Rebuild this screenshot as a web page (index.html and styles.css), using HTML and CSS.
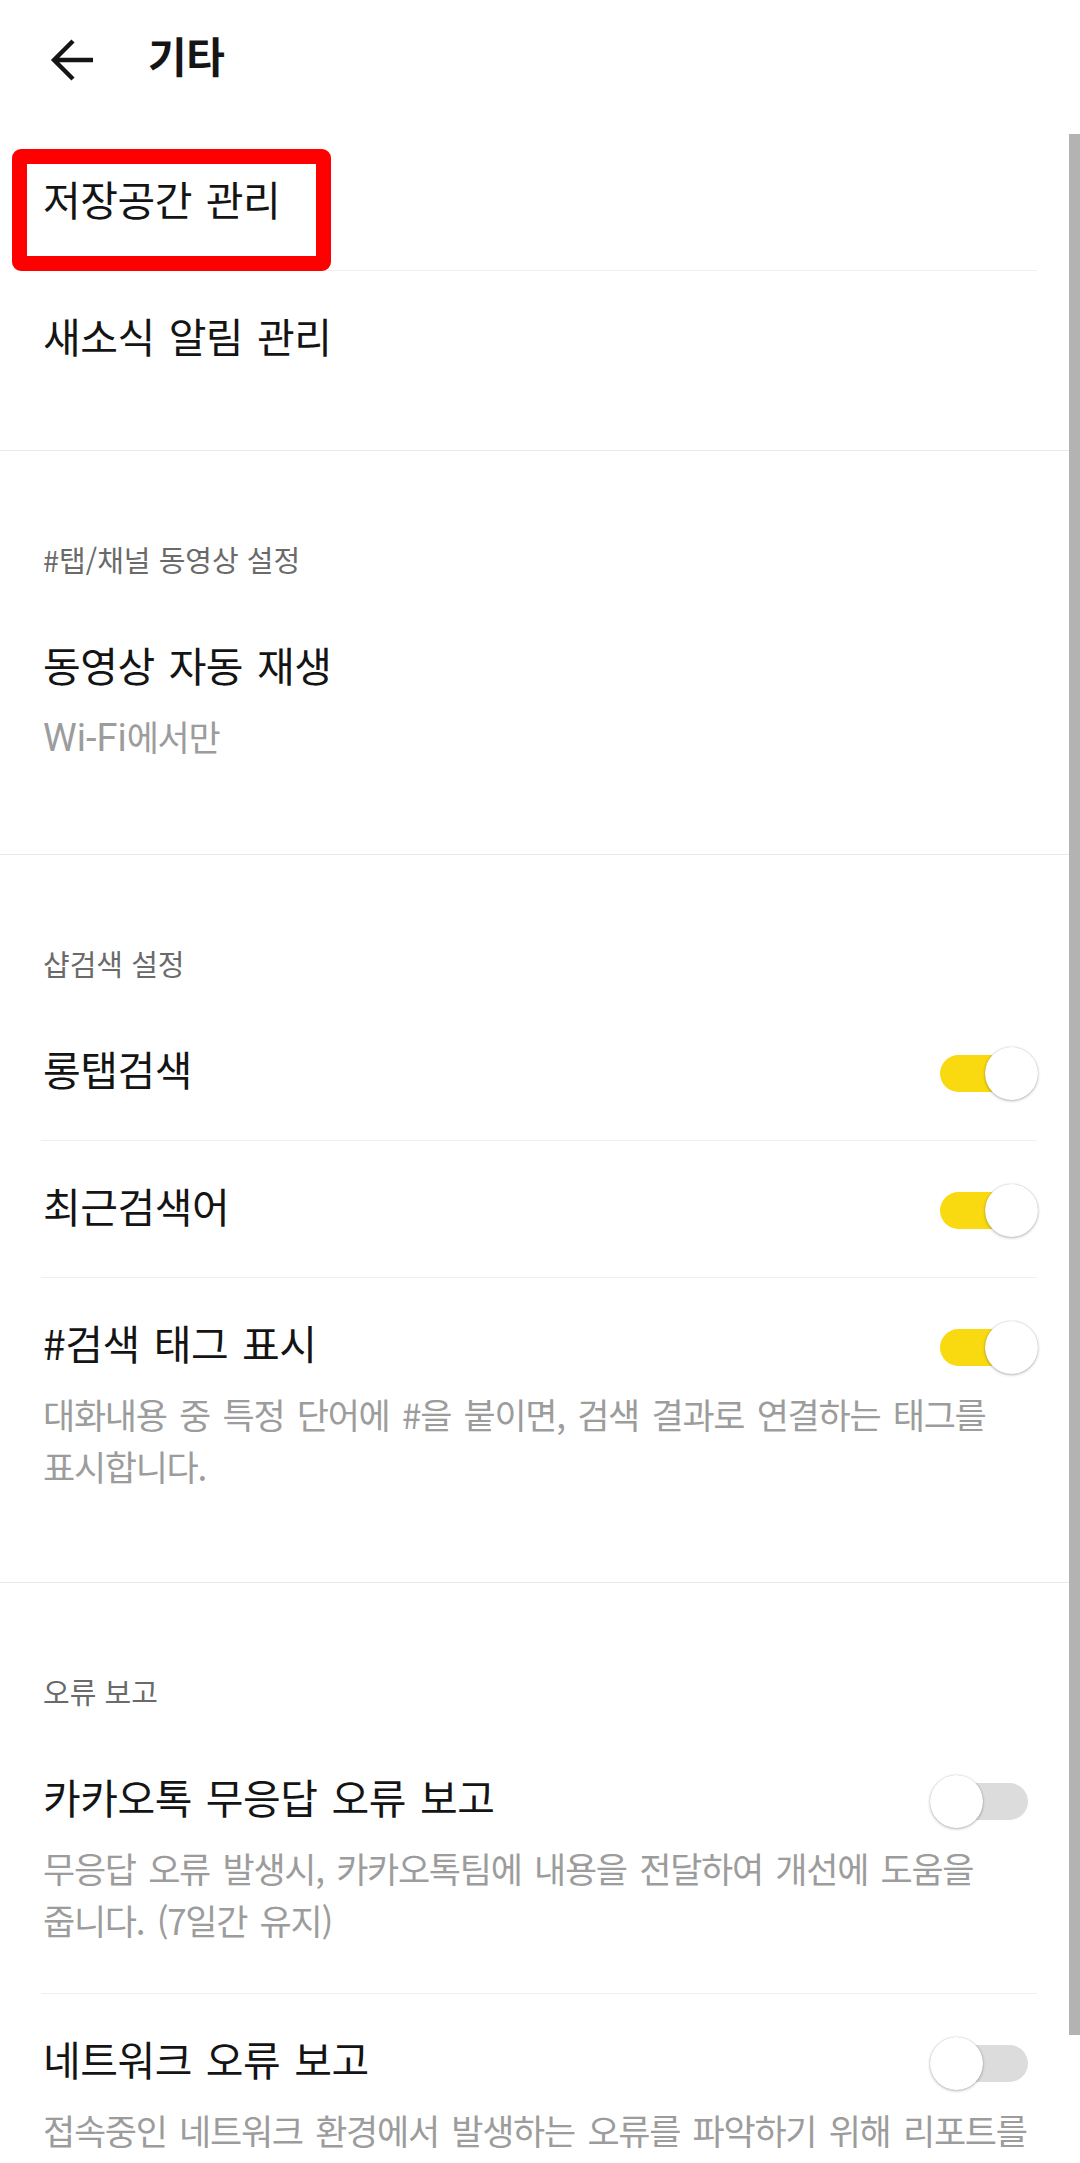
FILE: index.html
```html
<!DOCTYPE html>
<html lang="ko">
<head>
<meta charset="utf-8">
<title>기타</title>
<link rel="stylesheet" href="styles.css">
</head>
<body>
<div class="screen">
  <header class="topbar">
    <svg class="back" viewBox="0 0 48 48" width="48" height="48" aria-hidden="true">
      <path d="M45 24H7M25 5L6 24L25 43" fill="none" stroke="#151515" stroke-width="4.4"/>
    </svg>
    <h1 class="title">기타</h1>
  </header>

  <section class="group group-first">
    <div class="row row-marked">
      <div class="line"><span class="label">저장공간 관리</span></div>
      <span class="mark"></span>
    </div>
    <div class="row">
      <div class="line"><span class="label">새소식 알림 관리</span></div>
    </div>
  </section>

  <section class="group">
    <div class="group-head">#탭/채널 동영상 설정</div>
    <div class="row row-desc">
      <div class="line"><span class="label">동영상 자동 재생</span></div>
      <div class="desc"><span class="latin">Wi-Fi</span>에서만</div>
    </div>
  </section>

  <section class="group">
    <div class="group-head">샵검색 설정</div>
    <div class="row">
      <div class="line"><span class="label">롱탭검색</span><span class="switch on"><span class="track"></span><span class="knob"></span></span></div>
    </div>
    <div class="row">
      <div class="line"><span class="label">최근검색어</span><span class="switch on"><span class="track"></span><span class="knob"></span></span></div>
    </div>
    <div class="row row-desc">
      <div class="line"><span class="label">#검색 태그 표시</span><span class="switch on"><span class="track"></span><span class="knob"></span></span></div>
      <div class="desc">대화내용 중 특정 단어에 #을 붙이면, 검색 결과로 연결하는 태그를<br>표시합니다.</div>
    </div>
  </section>

  <section class="group group-last">
    <div class="group-head">오류 보고</div>
    <div class="row row-desc">
      <div class="line"><span class="label">카카오톡 무응답 오류 보고</span><span class="switch"><span class="track"></span><span class="knob"></span></span></div>
      <div class="desc">무응답 오류 발생시, 카카오톡팀에 내용을 전달하여 개선에 도움을<br>줍니다. (7일간 유지)</div>
    </div>
    <div class="row row-desc">
      <div class="line"><span class="label">네트워크 오류 보고</span><span class="switch"><span class="track"></span><span class="knob"></span></span></div>
      <div class="desc">접속중인 네트워크 환경에서 발생하는 오류를 파악하기 위해 리포트를</div>
    </div>
  </section>

  <div class="scrollbar"></div>
</div>
</body>
</html>
```

FILE: styles.css
```css
html, body {
  margin: 0;
  padding: 0;
  background: #ffffff;
}

.screen {
  position: relative;
  width: 1080px;
  height: 2163px;
  overflow: hidden;
  background: #ffffff;
  font-family: "Noto Sans CJK KR", "Noto Sans", sans-serif;
  color: #151515;
}

/* top bar */
.topbar {
  height: 116px;
  display: flex;
  align-items: center;
  padding-left: 48px;
  box-sizing: border-box;
}

.back {
  display: block;
  flex: none;
  margin-top: 4px;
}

.title {
  margin: -6px 0 0 52px;
  font-size: 42px;
  font-weight: 700;
  letter-spacing: -0.5px;
  line-height: 50px;
  color: #151515;
}

/* groups */
.group {
  border-bottom: 1px solid #e9e9e9;
  padding: 86px 0 42px;
}

.group-first {
  padding: 18px 0 42px;
}

.group-last {
  border-bottom: none;
}

.group-head {
  margin: 0 43px 19px 43px;
  font-size: 29px;
  line-height: 44px;
  letter-spacing: 0;
  color: #6a6a6a;
  white-space: nowrap;
}

/* rows */
.row {
  position: relative;
  margin: 0 43px 0 41px;
  padding: 42px 0 44px 2px;
  border-bottom: 1px solid #efefef;
}

.row:last-child {
  border-bottom-color: transparent;
}

.row-desc {
  padding-bottom: 47px;
}

.line {
  display: flex;
  align-items: center;
  justify-content: space-between;
  height: 50px;
}

.label {
  margin-bottom: 6px;
  font-size: 41px;
  font-weight: 400;
  line-height: 50px;
  letter-spacing: -0.5px;
  word-spacing: 3px;
  color: #141414;
  white-space: nowrap;
}

.desc {
  margin-top: 18px;
  font-size: 35px;
  line-height: 52px;
  letter-spacing: -1.3px;
  word-spacing: 4px;
  color: #9c9c9c;
  white-space: nowrap;
}

.latin {
  font-family: Roboto, "Noto Sans", sans-serif;
  font-size: 38px;
  letter-spacing: 0;
}

/* highlight annotation around the first item */
.mark {
  position: absolute;
  left: -29px;
  top: 15px;
  width: 319px;
  height: 122px;
  box-sizing: border-box;
  border: 15px solid #ff0000;
  border-radius: 9px;
  pointer-events: none;
}

/* switches */
.switch {
  position: relative;
  flex: none;
  width: 108px;
  height: 53px;
  margin: 4px -1px 0 0;
}

.track {
  position: absolute;
  left: 10px;
  right: 10px;
  top: 8px;
  height: 37px;
  border-radius: 19px;
  background: #dcdcdc;
}

.switch.on .track {
  background: #f9d90f;
}

.knob {
  position: absolute;
  top: 0;
  left: 0;
  width: 53px;
  height: 53px;
  border-radius: 50%;
  background: #ffffff;
  box-shadow: 0 1px 3px rgba(0, 0, 0, 0.28), 0 0 1px rgba(0, 0, 0, 0.25);
}

.switch.on .knob {
  left: auto;
  right: 0;
}

/* scroll indicator */
.scrollbar {
  position: absolute;
  right: 0;
  top: 134px;
  width: 11px;
  height: 1901px;
  background: #b3b3b3;
}
```
